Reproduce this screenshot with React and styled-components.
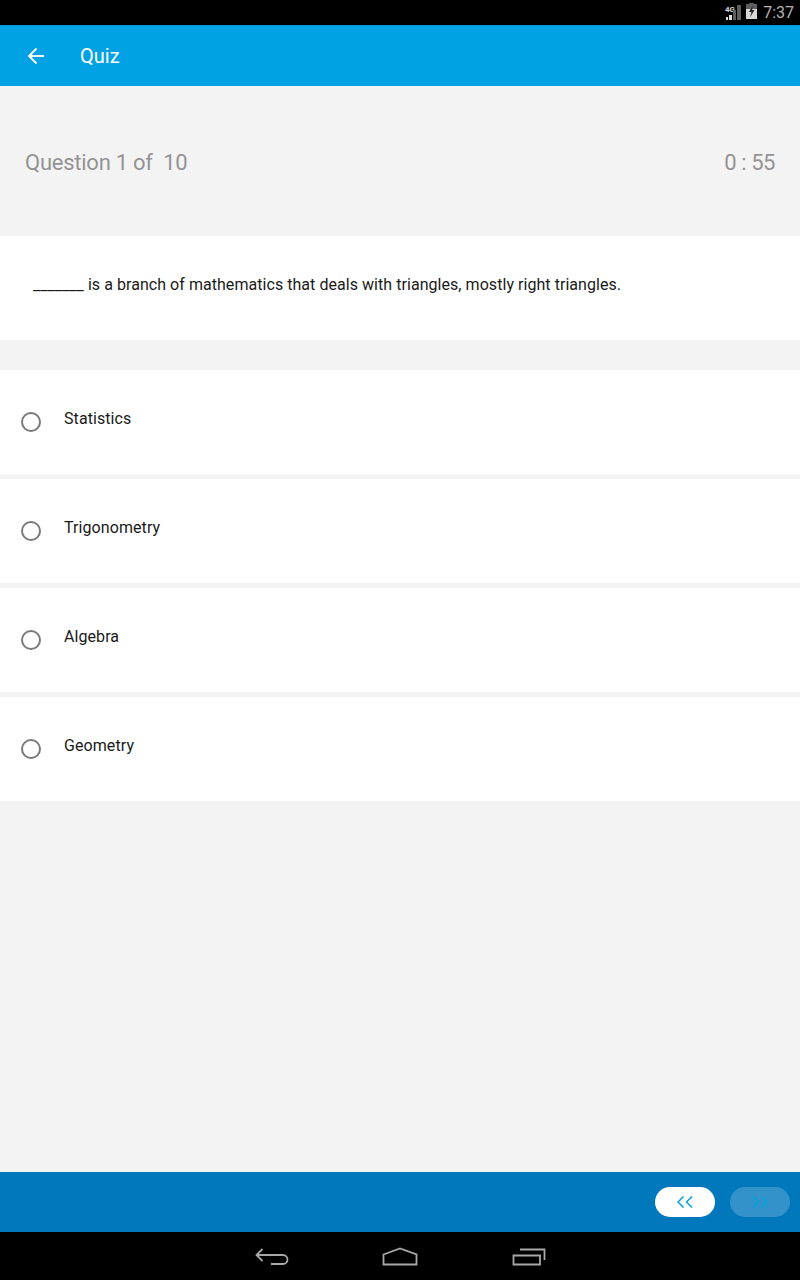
import React from "react";
import styled, { createGlobalStyle } from "styled-components";

const Global = createGlobalStyle`
  html, body { margin: 0; padding: 0; }
  body { font-family: Roboto, "Liberation Sans", sans-serif; background: #f3f3f3; }
`;
const Page = styled.div`
  width: 800px; height: 1280px; display: flex; flex-direction: column; background: #f3f3f3; overflow: hidden;
`;
const StatusBar = styled.div`
  height: 25px; background: #000; display: flex; align-items: center; justify-content: flex-end; padding-right: 6px; gap: 4px; flex: none;
`;
const Clock = styled.span`
  font-size: 16px; color: #b4b4b4; margin-left: 2px; line-height: 25px;
`;
const AppBar = styled.header`
  height: 61px; background: #00a2e3; border-top: 1px solid #0094d0; display: flex; align-items: center; flex: none; box-sizing: border-box; padding-left: 26px; color: #fff;
`;
const Title = styled.h1`
  margin: 0 0 0 34px; font-size: 20px; font-weight: 400; color: #fff;
`;
const QuizHead = styled.div`
  height: 150px; box-sizing: border-box; padding: 2px 25px 0; display: flex; align-items: center; justify-content: space-between; flex: none;
  color: #939393; font-size: 22px; letter-spacing: -0.25px;
  white-space: pre;
`;
const Timer = styled.span`
  letter-spacing: -0.45px;
`;
const Question = styled.div`
  height: 104px; background: #fff; box-sizing: border-box; padding: 39px 33px 0; font-size: 16px; letter-spacing: 0.05px; line-height: 20px; color: #1a1a1a; flex: none;
`;
const Options = styled.div`
  margin-top: 30px; display: flex; flex-direction: column; gap: 5px; flex: none;
`;
const Option = styled.div`
  height: 104px; background: #fff; display: flex; padding-left: 21px; box-sizing: border-box; flex: none;
`;
const Radio = styled.span`
  width: 20px; height: 20px; margin-top: 42px; box-sizing: border-box; border: 2px solid #7a7a7a; border-radius: 50%; flex: none;
`;
const OptionLabel = styled.span`
  margin: 39px 0 0 23px; font-size: 16px; letter-spacing: 0.08px; line-height: 20px; color: #1a1a1a;
`;
const Spacer = styled.div`flex: 1;`;
const BottomBar = styled.div`
  height: 60px; background: #0078bb; display: flex; align-items: center; justify-content: flex-end; gap: 15px; padding-right: 10px; flex: none;
`;
const Pill = styled.button`
  width: 60px; height: 30px; border: 0; padding: 0; border-radius: 15px; display: flex; align-items: center; justify-content: center;
  background: ${p => (p.$dim ? "#3392c9" : "#fff")};
`;
const NavBar = styled.div`
  height: 48px; background: #000; display: flex; align-items: center; justify-content: center; gap: 93px; padding-left: 1px; flex: none;
`;

const Chevrons = ({ dir }) => (
  <svg width="16" height="12" viewBox="0 0 16 12" fill="none" stroke="#00a2e3" strokeWidth="1.5">
    {dir === "left" ? (
      <path d="M6.500 0.500L1 6l5.500 5.500M15 0.500L9.500 6l5.500 5.500" />
    ) : (
      <path d="M1 0.500L6.500 6 1 11.500M9.500 0.500L15 6l-5.500 5.500" />
    )}
  </svg>
);

export default function App() {
  const options = ["Statistics", "Trigonometry", "Algebra", "Geometry"];
  return (
    <Page>
      <Global />
      <StatusBar>
        <svg width="18" height="19" viewBox="0 0 18 19">
          <text x="1" y="9" fontSize="8" fontWeight="700" fill="#d8d8d8" fontFamily="Roboto">4G</text>
          <path d="M2 17h2v-3H2zM5 17h3v-5H5z" fill="#e0e0e0" />
          <path d="M9 17h3V7H9zM13 17h4V2h-4z" fill="#5e5e5e" />
        </svg>
        <svg width="11" height="19" viewBox="0 0 11 19">
          <path d="M3 0h5v1h3v15H0V1h3z" fill="#5e5e5e" />
          <path d="M0 6h11v10H0z" fill="#d8d8d8" />
          <path d="M7 2L3 9h2.500L4 14.500 8.500 7H6z" fill="#222" />
        </svg>
        <Clock>7:37</Clock>
      </StatusBar>
      <AppBar>
        <svg width="20" height="20" viewBox="0 0 20 20" fill="none" stroke="#fff" strokeWidth="1.8">
          <path d="M18 10H3M10.500 2.500L3 10l7.500 7.500" />
        </svg>
        <Title>Quiz</Title>
      </AppBar>
      <QuizHead>
        <span>Question 1 of  10</span>
        <Timer>0 : 55</Timer>
      </QuizHead>
      <Question>_______ is a branch of mathematics that deals with triangles, mostly right triangles.</Question>
      <Options>
        {options.map(o => (
          <Option key={o}>
            <Radio />
            <OptionLabel>{o}</OptionLabel>
          </Option>
        ))}
      </Options>
      <Spacer />
      <BottomBar>
        <Pill><Chevrons dir="left" /></Pill>
        <Pill $dim><Chevrons dir="right" /></Pill>
      </BottomBar>
      <NavBar>
        <svg width="34" height="20" viewBox="0 0 34 20" fill="none" stroke="#a8a8a8" strokeWidth="1.8">
          <path d="M7.500 3L1.500 9l6 6M1.500 9H28a4.500 4.500 0 0 1 0 9H16" />
        </svg>
        <svg width="37" height="20" viewBox="0 0 37 20" fill="none" stroke="#a8a8a8" strokeWidth="1.8">
          <path d="M1.500 8.500L18 2.500l16.500 6v10h-33z" />
        </svg>
        <svg width="34" height="20" viewBox="0 0 34 20" fill="none" stroke="#a8a8a8" strokeWidth="1.8">
          <path d="M1.500 9.500H28v9H1.500zM8 3.500h24.500V14" />
        </svg>
      </NavBar>
    </Page>
  );
}
